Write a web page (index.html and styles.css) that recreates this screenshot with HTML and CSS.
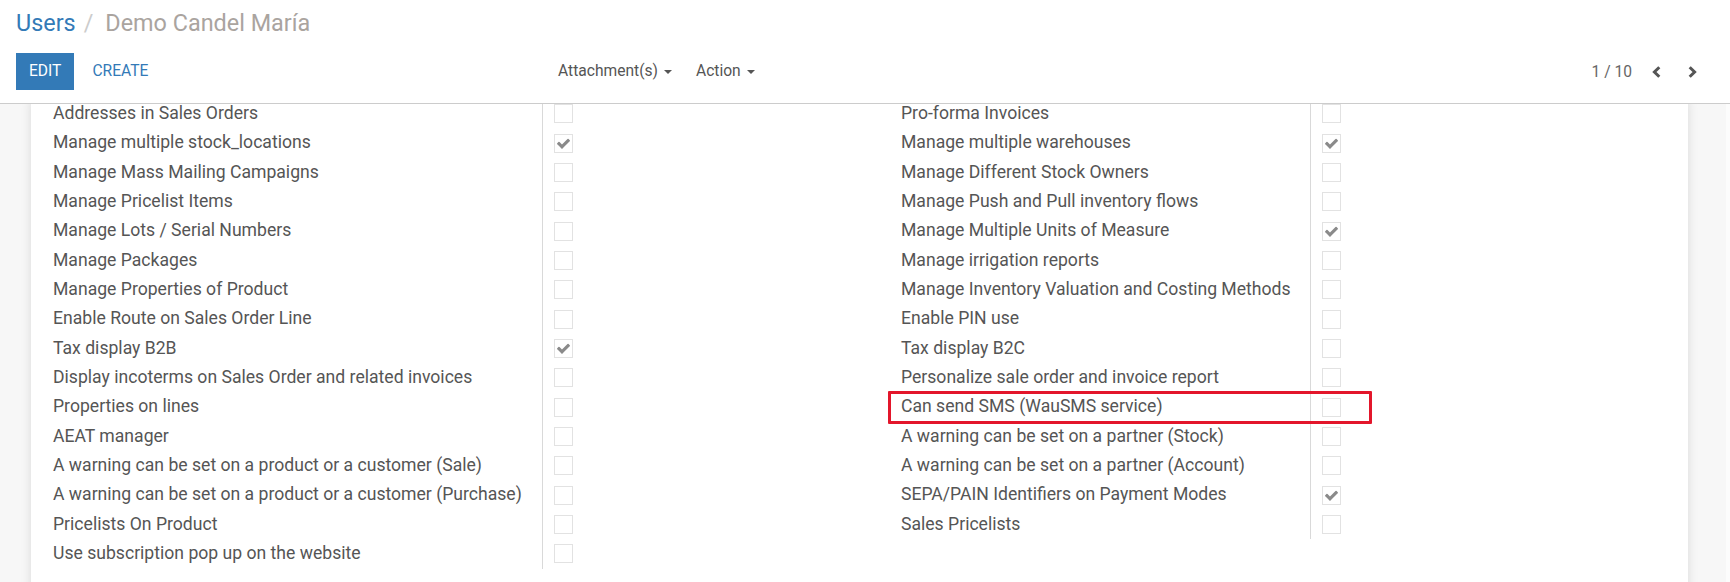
FILE: index.html
```html
<!DOCTYPE html>
<html lang="es">
<head>
<meta charset="utf-8">
<title>Users / Demo Candel María</title>
<link rel="stylesheet" href="styles.css">
</head>
<body>
<div class="cp">
  <div class="breadcrumb">
    <a class="bc-link">Users</a><span class="bc-sep">/</span><span class="bc-active">Demo Candel María</span>
  </div>
  <div class="cp-bottom">
    <div class="cp-buttons">
      <button class="btn btn-primary">Edit</button>
      <button class="btn btn-link">Create</button>
    </div>
    <div class="cp-sidebar">
      <button class="btn btn-drop">Attachment(s)<span class="caret"></span></button>
      <button class="btn btn-drop">Action<span class="caret"></span></button>
    </div>
    <div class="pager">
      <span class="pager-value">1 / 10</span>
      <button class="btn pager-btn" aria-label="Previous"><svg width="9" height="12" viewBox="0 0 9 12"><path d="M7.3 1.2 L2.4 6 L7.3 10.8" fill="none" stroke="#555" stroke-width="3"/></svg></button>
      <button class="btn pager-btn" aria-label="Next"><svg width="9" height="12" viewBox="0 0 9 12"><path d="M1.7 1.2 L6.6 6 L1.7 10.8" fill="none" stroke="#555" stroke-width="3"/></svg></button>
    </div>
  </div>
</div>
<div class="content">
  <div class="sheet">
    <div class="groups">
      <div class="group group-left">
        <div class="label">Addresses in Sales Orders</div><div class="field"><span class="cb"></span></div>
        <div class="label">Manage multiple stock_locations</div><div class="field"><span class="cb"><svg class="chk" width="15" height="15" viewBox="0 0 1792 1792"><path d="M1671 566q0 40-28 68l-724 724-136 136q-28 28-68 28t-68-28l-136-136-362-362q-28-28-28-68t28-68l136-136q28-28 68-28t68 28l294 295 656-657q28-28 68-28t68 28l136 136q28 28 28 68z"/></svg></span></div>
        <div class="label">Manage Mass Mailing Campaigns</div><div class="field"><span class="cb"></span></div>
        <div class="label">Manage Pricelist Items</div><div class="field"><span class="cb"></span></div>
        <div class="label">Manage Lots / Serial Numbers</div><div class="field"><span class="cb"></span></div>
        <div class="label">Manage Packages</div><div class="field"><span class="cb"></span></div>
        <div class="label">Manage Properties of Product</div><div class="field"><span class="cb"></span></div>
        <div class="label">Enable Route on Sales Order Line</div><div class="field"><span class="cb"></span></div>
        <div class="label">Tax display B2B</div><div class="field"><span class="cb"><svg class="chk" width="15" height="15" viewBox="0 0 1792 1792"><path d="M1671 566q0 40-28 68l-724 724-136 136q-28 28-68 28t-68-28l-136-136-362-362q-28-28-28-68t28-68l136-136q28-28 68-28t68 28l294 295 656-657q28-28 68-28t68 28l136 136q28 28 28 68z"/></svg></span></div>
        <div class="label">Display incoterms on Sales Order and related invoices</div><div class="field"><span class="cb"></span></div>
        <div class="label">Properties on lines</div><div class="field"><span class="cb"></span></div>
        <div class="label">AEAT manager</div><div class="field"><span class="cb"></span></div>
        <div class="label">A warning can be set on a product or a customer (Sale)</div><div class="field"><span class="cb"></span></div>
        <div class="label">A warning can be set on a product or a customer (Purchase)</div><div class="field"><span class="cb"></span></div>
        <div class="label">Pricelists On Product</div><div class="field"><span class="cb"></span></div>
        <div class="label">Use subscription pop up on the website</div><div class="field"><span class="cb"></span></div>
      </div>
      <div class="group group-right">
        <div class="label">Pro-forma Invoices</div><div class="field"><span class="cb"></span></div>
        <div class="label">Manage multiple warehouses</div><div class="field"><span class="cb"><svg class="chk" width="15" height="15" viewBox="0 0 1792 1792"><path d="M1671 566q0 40-28 68l-724 724-136 136q-28 28-68 28t-68-28l-136-136-362-362q-28-28-28-68t28-68l136-136q28-28 68-28t68 28l294 295 656-657q28-28 68-28t68 28l136 136q28 28 28 68z"/></svg></span></div>
        <div class="label">Manage Different Stock Owners</div><div class="field"><span class="cb"></span></div>
        <div class="label">Manage Push and Pull inventory flows</div><div class="field"><span class="cb"></span></div>
        <div class="label">Manage Multiple Units of Measure</div><div class="field"><span class="cb"><svg class="chk" width="15" height="15" viewBox="0 0 1792 1792"><path d="M1671 566q0 40-28 68l-724 724-136 136q-28 28-68 28t-68-28l-136-136-362-362q-28-28-28-68t28-68l136-136q28-28 68-28t68 28l294 295 656-657q28-28 68-28t68 28l136 136q28 28 28 68z"/></svg></span></div>
        <div class="label">Manage irrigation reports</div><div class="field"><span class="cb"></span></div>
        <div class="label">Manage Inventory Valuation and Costing Methods</div><div class="field"><span class="cb"></span></div>
        <div class="label">Enable PIN use</div><div class="field"><span class="cb"></span></div>
        <div class="label">Tax display B2C</div><div class="field"><span class="cb"></span></div>
        <div class="label">Personalize sale order and invoice report</div><div class="field"><span class="cb"></span></div>
        <div class="label">Can send SMS (WauSMS service)</div><div class="field"><span class="cb"></span></div>
        <div class="label">A warning can be set on a partner (Stock)</div><div class="field"><span class="cb"></span></div>
        <div class="label">A warning can be set on a partner (Account)</div><div class="field"><span class="cb"></span></div>
        <div class="label">SEPA/PAIN Identifiers on Payment Modes</div><div class="field"><span class="cb"><svg class="chk" width="15" height="15" viewBox="0 0 1792 1792"><path d="M1671 566q0 40-28 68l-724 724-136 136q-28 28-68 28t-68-28l-136-136-362-362q-28-28-28-68t28-68l136-136q28-28 68-28t68 28l294 295 656-657q28-28 68-28t68 28l136 136q28 28 28 68z"/></svg></span></div>
        <div class="label">Sales Pricelists</div><div class="field"><span class="cb"></span></div>
        <div class="highlight"></div>
      </div>
    </div>
  </div>
</div>
</body>
</html>
```

FILE: styles.css
```css
* { box-sizing: border-box; }

body {
  margin: 0;
  width: 1730px;
  height: 582px;
  overflow: hidden;
  background: #fff;
  font-family: Roboto, "Noto Sans", "Liberation Sans", sans-serif;
  font-size: 15.6px;
  color: #555;
}

/* control panel */
.cp {
  padding: 8px 16px 13px;
  border-bottom: 1px solid #ccc;
  background: #fff;
}

.breadcrumb {
  display: flex;
  font-size: 23.4px;
  line-height: 30px;
  height: 30px;
}

.bc-link { color: #337ab7; }
.bc-sep { color: #ccc; padding: 0 12px 0 8px; }
.bc-active { color: #aaa49f; }

.cp-bottom {
  display: flex;
  align-items: center;
  height: 37px;
  margin-top: 15px;
}

.btn {
  font-family: inherit;
  font-size: 15.6px;
  height: 37px;
  line-height: 37px;
  padding: 0 12px;
  border: 0;
  background: none;
  cursor: pointer;
  display: inline-flex;
  align-items: center;
}

.cp-buttons {
  display: flex;
  flex: 0 0 530px;
}

.btn-primary {
  background: #337ab7;
  color: #fff;
  text-transform: uppercase;
  padding: 0 13px;
}

.btn-link {
  color: #337ab7;
  text-transform: uppercase;
  margin-left: 6px;
}

.cp-sidebar { display: flex; }

.btn-drop { color: #555; }

.caret {
  width: 0;
  height: 0;
  margin-left: 6px;
  border-left: 4px solid transparent;
  border-right: 4px solid transparent;
  border-top: 4px solid #555;
}

.pager {
  margin-left: auto;
  margin-right: 4px;
  display: flex;
  align-items: center;
}

.pager-value {
  color: #666;
  margin-right: 6px;
}

.pager-btn {
  width: 36px;
  padding: 0;
  justify-content: center;
}

/* content */
.content {
  height: 478px;
  overflow: hidden;
  background: #f7f7f7;
  padding: 0 38px 0 31px;
  border-right: 4px solid #fcfcfc;
}

.sheet {
  background: #fff;
  height: 500px;
  margin-top: -4.5px;
  padding-left: 22px;
  box-shadow: 0 0 10px rgba(0, 0, 0, 0.12);
}

.groups {
  display: grid;
  grid-template-columns: 848px 1fr;
}

.group {
  position: relative;
  display: grid;
  grid-auto-rows: 29.33px;
  align-content: start;
}

.group-left { grid-template-columns: 490px 1fr; }
.group-right { grid-template-columns: 410px 1fr; }

.label {
  border-right: 1px solid #d9d9d9;
  font-size: 17.6px;
  line-height: 24px;
  padding-top: 1.5px;
  white-space: nowrap;
  color: #555;
}

.field {
  padding: 4.8px 0 0 11px;
}

.cb {
  width: 19px;
  height: 19px;
  border: 1px solid #e2e2e2;
  background: #fff;
  display: flex;
  align-items: center;
  justify-content: center;
}

.chk { fill: #8a8a8a; }

.highlight {
  position: absolute;
  left: -13px;
  top: 291px;
  width: 484px;
  height: 33px;
  border: 3px solid #e3162b;
  border-radius: 1px;
  pointer-events: none;
}
```
